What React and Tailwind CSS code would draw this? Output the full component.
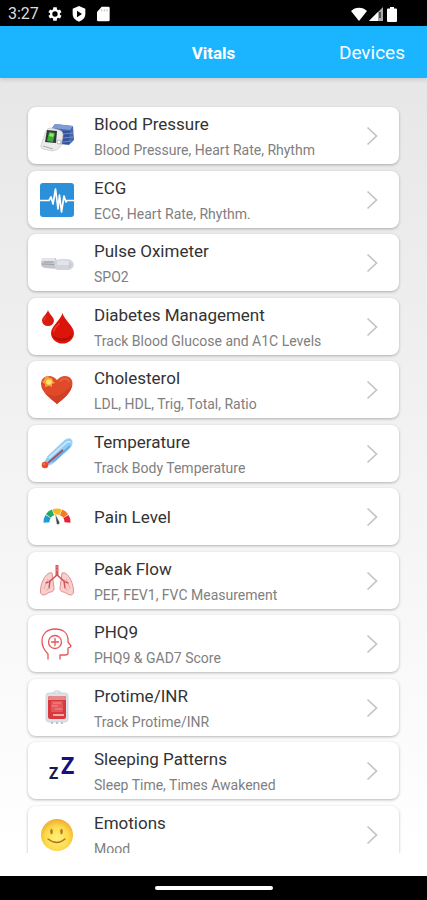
import React from 'react';

const BloodPressureIcon = () => (
  <svg viewBox="0 0 36 36" className="size-9">
    <path d="M13 10 L16 6 L34 8 L35 22 L30 27 L20 26 Z" fill="#4768ad" />
    <path d="M13 10 L16 6 L34 8 L31 12 Z" fill="#7f9bd3" />
    <path d="M23 13 L31 13 L30 26 L24 26 Z" fill="#34519a" />
    <path d="M24 16 L34 15 M24 20 L34 19 M24 24 L32 23" stroke="#7f9bd3" strokeWidth="0.8" />
    <path d="M2 27 L7 13 Q8 10 12 10 L20 12 Q24 13 24 17 L22 28 Q18 33 13 33 L4 31 Q1 30 2 27 Z" fill="#ebebeb" stroke="#c5c5c5" strokeWidth="0.7" />
    <path d="M8 12 L18 13 L17 25 L6 24 Z" fill="#2f383c" />
    <path d="M10 14 L16 15 L14 24 L8 23 Z" fill="#3fae34" />
    <path d="M11 15 L15 16 L14 19 L10 18 Z" fill="#8fe868" />
    <path d="M4 28 L14 31" stroke="#aaa" strokeWidth="1" />
    <circle cx="20" cy="24" r="2" fill="#fff" stroke="#999" strokeWidth="0.8" />
  </svg>
);

const EcgIcon = () => (
  <svg viewBox="0 0 36 36" className="size-9">
    <rect x="1" y="1" width="34" height="34" rx="3" fill="#2b90d9" />
    <path d="M1 18.500 H10 L12 15 L14 22 L16.500 7 L19 27 L20.500 13 L22.500 30 L25 14 L27 20 L28 18.500 H35" fill="none" stroke="#fff" strokeWidth="1.700" strokeLinejoin="round" />
  </svg>
);

const OximeterIcon = () => (
  <svg viewBox="0 0 36 36" className="size-9">
    <path d="M3 13 L17 13 L18 24 L6 23 Q2 22 2 19 Z" fill="#c3c6cb" />
    <path d="M3 13 L16 13 L16 16 L3 16 Z" fill="#e3e5ea" />
    <path d="M3 19 L15 19.500 M5 17 L14 17" stroke="#9da2a9" strokeWidth="1" />
    <path d="M16 15 Q27 13 32 15 Q35 17 35 20 Q34 24 30 25 L18 25 Q15 24 16 15 Z" fill="#d2d4dd" />
    <path d="M18 16 Q26 14 32 17 L29 20 L18 20 Z" fill="#e3e4eb" />
    <path d="M30 17 Q33 19 30 23" fill="none" stroke="#b9bcc9" strokeWidth="1" />
  </svg>
);

const DropsIcon = () => (
  <svg viewBox="0 0 36 36" className="size-9">
    <path d="M9 1 C10 5 15 8 15 11.500 A6 5.500 0 0 1 3 11.500 C3 8 8 5 9 1 Z" fill="#d81a10" />
    <path d="M23.500 4 C25 11 35 17 35 24 A11.500 10.500 0 0 1 12 24 C12 17 22 11 23.500 4 Z" fill="#dc1409" />
    <path d="M13 25 A11 10 0 0 0 34 25 Q28 31 20 29 Q15 28 13 25 Z" fill="#b50d08" />
    <path d="M15 22 C15 19 18 17 20 15" stroke="#f23423" strokeWidth="1.800" strokeLinecap="round" fill="none" />
    <path d="M5 11 Q5 9 7 8" stroke="#f8432f" strokeWidth="1" strokeLinecap="round" fill="none" />
  </svg>
);

const HeartIcon = () => (
  <svg viewBox="0 0 36 36" className="size-9">
    <path d="M18 32 C12 27 2 20 2 12 C2 4 12 1 18 8 C24 1 34 4 33.500 12 C33 21 23 28 18 32 Z" fill="#e04a29" />
    <path d="M33 13 C32 21 23 28 18 32 C14 28 9 25 6 21 Q16 27 24 21 Q30 16 33 13 Z" fill="#cf4026" />
    <path d="M21 9 Q26 4 30 9" fill="none" stroke="#e8623f" strokeWidth="1.800" strokeLinecap="round" />
    <path d="M9 4 L11 6 L13 6 L14 9 L16 11 L13 12 L13 15 L10 14 L6 15 L6 12 L3 10 L5 8 L6 5 Z" fill="#f2a03a" />
    <circle cx="10" cy="10" r="2.800" fill="#ffe16b" />
  </svg>
);

const ThermometerIcon = () => (
  <svg viewBox="0 0 36 36" className="size-9">
    <path d="M5 27 L9 20 L26 4 Q32 1 33 5 Q34 9 30 13 L13 28 L7 30 Z" fill="#8ccaf4" stroke="#a9d6f6" strokeWidth="1" />
    <path d="M10 22 L28 6 Q31 5 31 7" fill="none" stroke="#c4e6fc" strokeWidth="2" />
    <path d="M9 27 L24 14" stroke="#9a5268" strokeWidth="2" />
    <path d="M14 26 L31 10" stroke="#5aa8e6" strokeWidth="1.500" />
    <circle cx="6" cy="29" r="3.300" fill="#e84a2c" />
    <circle cx="5" cy="28" r="1" fill="#f98263" />
  </svg>
);

const GaugeIcon = () => (
  <svg viewBox="0 0 36 36" className="size-9">
    <g fill="none" strokeWidth="6">
      <path d="M7.500 23.500 A10.500 10.500 0 0 1 9 17.500" stroke="#209bd0" />
      <path d="M9.300 17 A10.500 10.500 0 0 1 14 13.400" stroke="#22ab65" />
      <path d="M14.500 13.200 A10.500 10.500 0 0 1 21.500 13.200" stroke="#f7b720" />
      <path d="M22 13.400 A10.500 10.500 0 0 1 26.700 17" stroke="#ef7c24" />
      <path d="M27 17.500 A10.500 10.500 0 0 1 28.500 23.500" stroke="#e32436" />
    </g>
    <path d="M16 14 L20.500 23 A1.500 1.500 0 0 1 17.500 24.500 Z" fill="#3f4649" stroke="#fff" strokeWidth="0.500" />
  </svg>
);

const LungsIcon = () => (
  <svg viewBox="0 0 36 36" className="size-9">
    <path d="M13 10 C8 8 2 18 1.500 27 C1 33 5 33 9 30 C12 28 15 30 15 25 Z" fill="#f9cfcd" stroke="#dd9090" strokeWidth="1" />
    <path d="M23 10 C28 8 34 18 34.500 27 C35 33 31 33 27 30 C24 28 21 30 21 25 Z" fill="#f9cfcd" stroke="#dd9090" strokeWidth="1" />
    <path d="M18 2 V13" stroke="#d9575a" strokeWidth="3" />
    <path d="M18 12 L11 18 L7 20 M11 18 L10 25 M18 12 L25 18 L29 20 M25 18 L26 25" fill="none" stroke="#cb5459" strokeWidth="1.500" strokeLinecap="round" />
    <path d="M7 20 L5 26 M10 24 L7 28 M8 16 L10 19 M29 20 L31 26 M26 24 L29 28 M28 16 L26 19" stroke="#e9a3a3" strokeWidth="0.900" />
    <path d="M16 4 H20 M16 7 H20" stroke="#f4a3a3" strokeWidth="0.700" />
  </svg>
);

const HeadIcon = () => (
  <svg viewBox="0 0 36 36" className="size-9" fill="none" stroke="#e5555a" strokeWidth="1.300" strokeLinecap="round" strokeLinejoin="round">
    <path d="M9 33 V28 C5 24 3 21 3 15 C3 8 8 3 16 3 C24 3 29 7 29 14 L29 16 L32 20 Q32 21 29 22 L29 27 Q29 29 26 29 H21 V33" />
    <circle cx="16" cy="16" r="6.500" />
    <path d="M16 12.500 V19.500 M12.500 16 H19.500" />
  </svg>
);

const BloodBagIcon = () => (
  <svg viewBox="0 0 36 36" className="size-9">
    <path d="M14 3 Q18 -1 22 3" fill="none" stroke="#d3dbe0" strokeWidth="1.500" />
    <rect x="7" y="3" width="22" height="29" rx="3" fill="#dbe3e7" stroke="#c3ccd2" strokeWidth="0.700" />
    <rect x="9" y="6" width="18" height="23" rx="2" fill="#d9393e" />
    <path d="M9 10 Q9 6 12 6 H24 Q27 6 27 10 Z" fill="#e88a8b" />
    <rect x="12" y="11" width="12" height="11" rx="1" fill="#e5565a" />
    <path d="M14 13 H22 M13 16 H19 M16 19 H23" stroke="#f08f90" strokeWidth="1.200" />
    <path d="M14 25 H25" stroke="#f4aaaa" strokeWidth="2" />
    <path d="M13 32 V34 M18 32 V34 M23 32 V34" stroke="#b4bfc6" strokeWidth="1.800" />
  </svg>
);

const SleepIcon = () => (
  <svg viewBox="0 0 36 36" className="size-9 font-['Open_Sans',sans-serif] font-bold">
    <text x="10" y="26" fontSize="16" fill="#1b1848">Z</text>
    <text x="22" y="21" fontSize="23" fill="#161080">Z</text>
  </svg>
);

const SmileIcon = () => (
  <svg viewBox="0 0 36 36" className="size-9">
    <defs>
      <radialGradient id="face" cx="0.5" cy="0.6" r="0.6">
        <stop offset="0" stopColor="#fff07a" />
        <stop offset="0.6" stopColor="#ffdb4c" />
        <stop offset="1" stopColor="#eeaa2e" />
      </radialGradient>
    </defs>
    <circle cx="18" cy="18" r="16" fill="url(#face)" />
    <ellipse cx="12.500" cy="14.500" rx="1.300" ry="2.800" fill="#b07a28" />
    <ellipse cx="22.500" cy="14.500" rx="1.300" ry="2.800" fill="#b07a28" />
    <path d="M9 22 Q18 29 26 22" fill="none" stroke="#a87328" strokeWidth="1.400" strokeLinecap="round" />
  </svg>
);

const vitals = [
  { title: 'Blood Pressure', detail: 'Blood Pressure, Heart Rate, Rhythm', Icon: BloodPressureIcon },
  { title: 'ECG', detail: 'ECG, Heart Rate, Rhythm.', Icon: EcgIcon },
  { title: 'Pulse Oximeter', detail: 'SPO2', Icon: OximeterIcon },
  { title: 'Diabetes Management', detail: 'Track Blood Glucose and A1C Levels', Icon: DropsIcon },
  { title: 'Cholesterol', detail: 'LDL, HDL, Trig, Total, Ratio', Icon: HeartIcon },
  { title: 'Temperature', detail: 'Track Body Temperature', Icon: ThermometerIcon },
  { title: 'Pain Level', Icon: GaugeIcon },
  { title: 'Peak Flow', detail: 'PEF, FEV1, FVC Measurement', Icon: LungsIcon },
  { title: 'PHQ9', detail: 'PHQ9 & GAD7 Score', Icon: HeadIcon },
  { title: 'Protime/INR', detail: 'Track Protime/INR', Icon: BloodBagIcon },
  { title: 'Sleeping Patterns', detail: 'Sleep Time, Times Awakened', Icon: SleepIcon },
  { title: 'Emotions', detail: 'Mood', Icon: SmileIcon },
];

const StatusBar = () => (
  <div className="flex h-[26px] shrink-0 items-center justify-between bg-black pt-[2px] pr-7 pl-2 text-white">
    <div className="flex items-center gap-2">
      <span className="text-base leading-5 text-[#ddd]">3:27</span>
      <svg viewBox="0 0 24 24" className="size-4" fill="currentColor">
        <path fillRule="evenodd" d="M19.400 13a7.500 7.500 0 0 0 0-2l2.400-1.800-2.300-4-2.800 1.200a7.500 7.500 0 0 0-1.700-1L14.600 2H9.400L9 5.400a7.500 7.500 0 0 0-1.700 1L4.500 5.200l-2.300 4L4.600 11a7.500 7.500 0 0 0 0 2l-2.400 1.800 2.300 4 2.800-1.200a7.500 7.500 0 0 0 1.700 1l.4 3.400h5.200l.4-3.400a7.500 7.500 0 0 0 1.700-1l2.800 1.200 2.300-4zM12 16a4 4 0 1 1 0-8 4 4 0 0 1 0 8z" />
      </svg>
      <svg viewBox="0 0 24 24" className="size-4" fill="currentColor">
        <path fillRule="evenodd" d="M12 0 21.500 4V12c0 5.500-4 9.500-9.500 11.500C6.500 21.500 2.500 17.500 2.500 12V4zM9 7v10l7.500-5z" />
      </svg>
      <svg viewBox="0 0 24 24" className="size-4" fill="currentColor">
        <path d="M10 1h10a2 2 0 0 1 2 2v18a2 2 0 0 1-2 2H5a2 2 0 0 1-2-2V9z" />
        <path d="M10 5v3M14 5v3M18 5v3" stroke="#aaa" strokeWidth="1.200" />
      </svg>
    </div>
    <div className="flex items-center gap-[2px]">
      <svg viewBox="0 0 16 14" className="h-[14px] w-4" fill="currentColor">
        <path d="M8 14 0 4C4-.5 12-.5 16 4z" />
      </svg>
      <svg viewBox="0 0 14 14" className="size-[14px]" fill="currentColor">
        <path d="M0 14 14 0V14z" fill="#aaa" />
        <path d="M0 14 9 5V14z" />
        <path d="M11 5V11" stroke="#333" strokeWidth="1.500" />
      </svg>
      <svg viewBox="0 0 10 15" className="h-[15px] w-[14px]" fill="currentColor">
        <path d="M3 0h4v1.500h2q1 0 1 1V14q0 1-1 1H1q-1 0-1-1V2.500q0-1 1-1h2z" />
      </svg>
    </div>
  </div>
);

const VitalCard = ({ title, detail, Icon }) => (
  <li className="odd:mb-[7px] even:mb-[6px]">
    <button type="button" className="flex min-h-[57px] w-full items-center rounded-lg bg-white pr-[21px] pl-[11px] text-left shadow-[0_1px_3px_rgba(0,0,0,0.28)]">
      <Icon />
      <span className={`ml-[19px] flex flex-1 flex-col gap-[6px] ${detail ? 'pt-[7px] pb-1' : ''}`}>
        <span className="text-[17px] leading-5 text-[#333]">{title}</span>
        {detail && <span className="text-sm leading-5 text-[#808080]">{detail}</span>}
      </span>
      <svg viewBox="0 0 12 20" className="h-5 w-3" fill="none" stroke="#c4c4c4" strokeWidth="1.700">
        <path d="M1.500 1.500 10.500 10 1.500 18.500" />
      </svg>
    </button>
  </li>
);

const App = () => {
  return (
    <div className="flex h-screen flex-col bg-white font-[Roboto,sans-serif]">
      <StatusBar />

      <header className="z-10 grid h-[52px] shrink-0 grid-cols-3 items-center bg-[#1ab4ff] px-[22px] pt-[2px] text-white shadow-[0_2px_4px_rgba(0,0,0,0.12)]">
        <h1 className="col-start-2 text-center text-[17px] leading-6 font-bold">Vitals</h1>
        <button type="button" className="justify-self-end text-[19px] leading-6">Devices</button>
      </header>

      <main className="min-h-0 flex-1 overflow-hidden bg-linear-to-b from-[#e7e7e7] to-white px-7 pt-[29px]">
        <ul>
          {vitals.map(v => <VitalCard key={v.title} {...v} />)}
        </ul>
      </main>

      {/* System navigation */}
      <footer className="shrink-0 bg-white pt-[23px]">
        <div className="flex h-6 items-center justify-center bg-black">
          <div className="h-1 w-[118px] rounded-full bg-white" />
        </div>
      </footer>
    </div>
  );
};

export default App;
